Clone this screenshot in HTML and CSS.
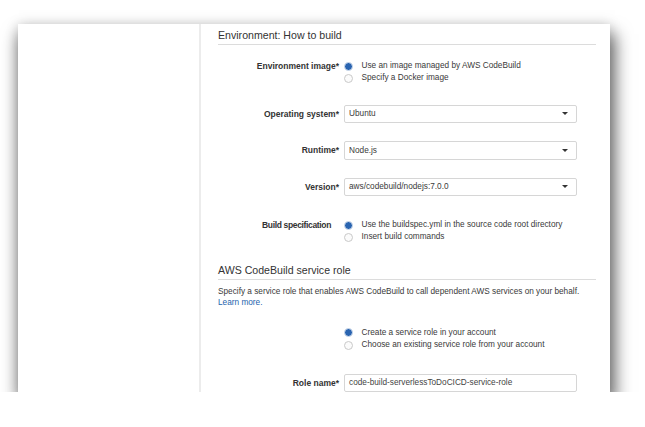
FILE: index.html
```html
<!DOCTYPE html>
<html>
<head>
<meta charset="utf-8">
<link rel="stylesheet" href="styles.css">
</head>
<body>
<div class="card">
  <div class="side"></div>
  <div class="main">
    <h2 class="section-title first">Environment: How to build</h2>

    <div class="row radio-row env">
      <div class="label">Environment image*</div>
      <div class="options">
        <div class="opt"><span class="radio on"></span>Use an image managed by AWS CodeBuild</div>
        <div class="opt"><span class="radio"></span>Specify a Docker image</div>
      </div>
    </div>

    <div class="row select-row os">
      <div class="label">Operating system*</div>
      <div class="select"><span>Ubuntu</span><span class="caret"></span></div>
    </div>
    <div class="row select-row">
      <div class="label">Runtime*</div>
      <div class="select"><span>Node.js</span><span class="caret"></span></div>
    </div>
    <div class="row select-row">
      <div class="label">Version*</div>
      <div class="select"><span>aws/codebuild/nodejs:7.0.0</span><span class="caret"></span></div>
    </div>

    <div class="row radio-row spec">
      <div class="label no-req">Build specification</div>
      <div class="options">
        <div class="opt"><span class="radio on"></span>Use the buildspec.yml in the source code root directory</div>
        <div class="opt"><span class="radio"></span>Insert build commands</div>
      </div>
    </div>

    <h2 class="section-title second">AWS CodeBuild service role</h2>
    <p class="desc">Specify a service role that enables AWS CodeBuild to call dependent AWS services on your behalf.<br><a class="link">Learn more.</a></p>

    <div class="row radio-row role">
      <div class="label"></div>
      <div class="options">
        <div class="opt"><span class="radio on"></span>Create a service role in your account</div>
        <div class="opt"><span class="radio"></span>Choose an existing service role from your account</div>
      </div>
    </div>

    <div class="row input-row">
      <div class="label">Role name*</div>
      <div class="input">code-build-serverlessToDoCICD-service-role</div>
    </div>
  </div>
</div>
</body>
</html>
```

FILE: styles.css
```css
html, body {
  margin: 0;
  padding: 0;
  background: #ffffff;
}
body {
  padding: 24px 0 0 18px;
  font-family: "Liberation Sans", Arial, sans-serif;
  color: #333;
}
.card {
  width: 592px;
  height: 368px;
  background: #fff;
  display: flex;
  overflow: hidden;
  box-shadow: 3px 12px 16px 2px rgba(0, 0, 0, 0.58), 0 0 12px rgba(0, 0, 0, 0.15);
}
.side {
  width: 181px;
  flex: none;
  border-right: 2px solid #ececec;
}
.main {
  flex: 1;
  padding: 0 14px 0 17px;
}
.section-title {
  margin: 0;
  font-weight: normal;
  font-size: 10.6px;
  line-height: 15px;
  color: #333;
  border-bottom: 1px solid #dcdcdc;
  padding-bottom: 1px;
}
.section-title.first {
  margin-top: 4px;
}
.section-title.second {
  margin-top: 19px;
}
.row {
  display: flex;
  align-items: flex-start;
}
.label {
  width: 121px;
  flex: none;
  text-align: right;
  font-weight: bold;
  font-size: 8.5px;
  color: #333;
  padding-right: 5px;
  line-height: 12px;
}
.label.no-req {
  width: 113px;
  padding-right: 13px;
  letter-spacing: -0.35px;
}
.options {
  display: flex;
  flex-direction: column;
}
.opt {
  display: flex;
  align-items: center;
  font-size: 8.25px;
  line-height: 12.3px;
  color: #3a3a3a;
}
.radio {
  width: 9px;
  height: 9px;
  border-radius: 50%;
  border: 1px solid #c9c9c9;
  background: #fbfbfb;
  margin: 0 9px 0 -0.5px;
  flex: none;
  box-sizing: border-box;
}
.radio.on {
  border: 1.5px solid #d6e1ef;
  background: #2a64b0;
}
.env {
  margin-top: 15px;
}
.select-row {
  margin-top: 18px;
  align-items: center;
}
.select-row.os {
  margin-top: 20px;
}
.select-row .label {
  line-height: 18px;
}
.select {
  width: 233px;
  height: 18.5px;
  box-sizing: border-box;
  border: 1px solid #d6d6d6;
  border-radius: 2px;
  display: flex;
  align-items: center;
  justify-content: space-between;
  padding: 0 8px 0 4px;
  font-size: 8.25px;
  color: #3a3a3a;
  background: #fff;
}
.caret {
  width: 0;
  height: 0;
  border-left: 3px solid transparent;
  border-right: 3px solid transparent;
  border-top: 3.5px solid #333;
}
.spec {
  margin-top: 23px;
}
.desc {
  margin: 6px 0 0;
  font-size: 8.25px;
  line-height: 11.5px;
  color: #3a3a3a;
}
.link {
  color: #1e64ad;
}
.role {
  margin-top: 18px;
}
.input-row {
  margin-top: 22.5px;
  align-items: center;
}
.input-row .label {
  line-height: 18px;
}
.input {
  width: 233px;
  height: 18px;
  box-sizing: border-box;
  border: 1px solid #d6d6d6;
  border-radius: 2px;
  padding: 0 4px;
  font-size: 8.25px;
  line-height: 16px;
  color: #444;
}
```
